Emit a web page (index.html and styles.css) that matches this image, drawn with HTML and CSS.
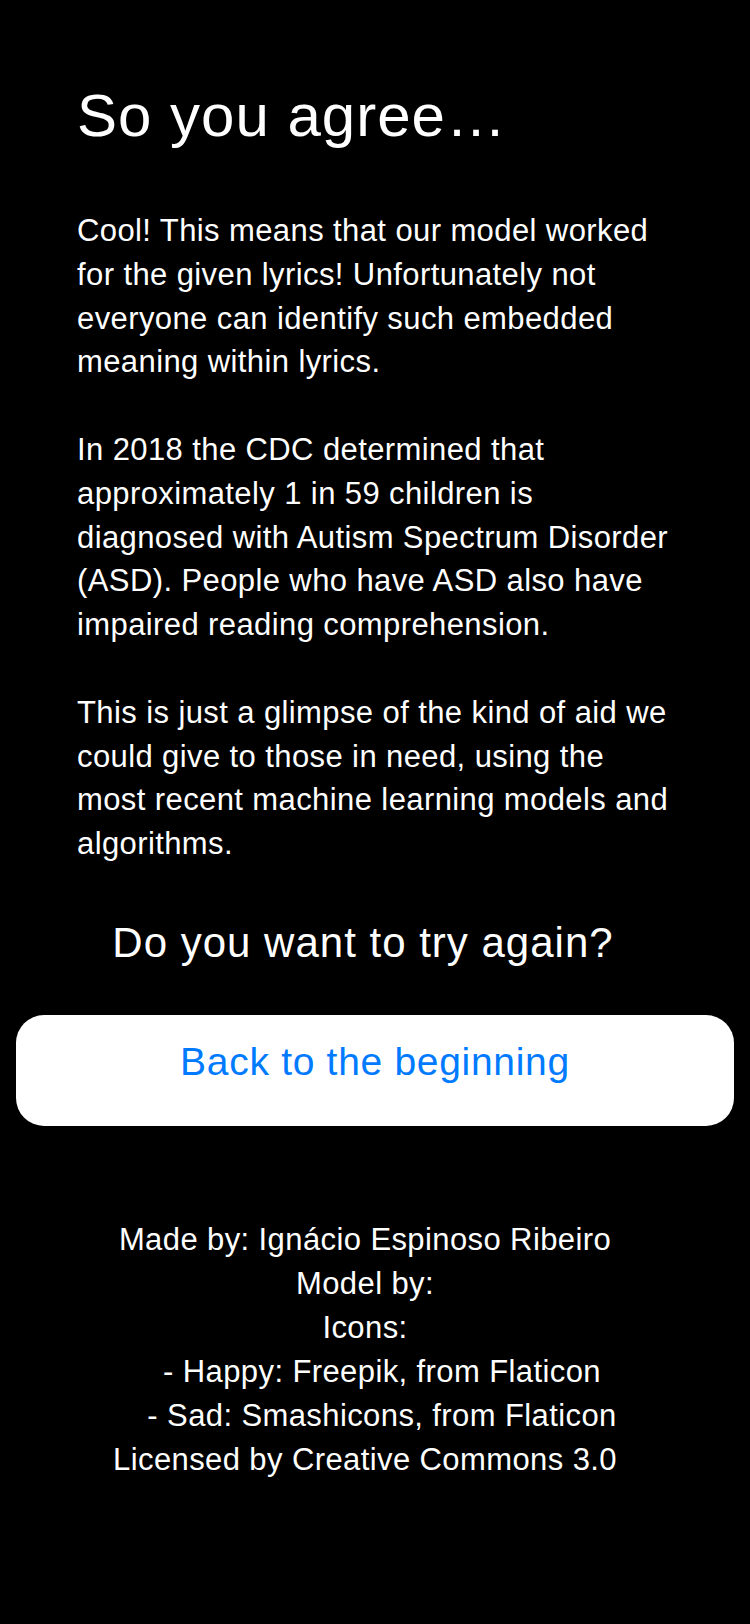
FILE: index.html
```html
<!DOCTYPE html>
<html lang="en">
<head>
<meta charset="utf-8">
<title>So you agree…</title>
<link rel="stylesheet" href="styles.css">
</head>
<body>
<main class="page">
  <h1 class="title">So you agree…</h1>
  <div class="text">
    <p>Cool! This means that our model worked for the given lyrics! Unfortunately not everyone can identify such embedded meaning within lyrics.</p>
    <p>In 2018 the CDC determined that approximately 1 in 59 children is diagnosed with Autism Spectrum Disorder (ASD). People who have ASD also have impaired reading comprehension.</p>
    <p>This is just a glimpse of the kind of aid we could give to those in need, using the most recent machine learning models and algorithms.</p>
  </div>
  <h2 class="question">Do you want to try again?</h2>
  <button class="back" type="button">Back to the beginning</button>
  <footer class="credits">
    <div class="line">Made by: Ignácio Espinoso Ribeiro</div>
    <div class="line">Model by:</div>
    <div class="line">Icons:</div>
    <div class="line indent">- Happy: Freepik, from Flaticon</div>
    <div class="line indent">- Sad: Smashicons, from Flaticon</div>
    <div class="line">Licensed by Creative Commons 3.0</div>
  </footer>
</main>
</body>
</html>
```

FILE: styles.css
```css
html, body {
  margin: 0;
  padding: 0;
  background: #000;
}

body {
  color: #fff;
  font-family: "Liberation Sans", Arial, Helvetica, sans-serif;
}

.page {
  display: flex;
  flex-direction: column;
  padding-top: 83px;
  min-height: 1624px;
  box-sizing: border-box;
}

.title {
  margin: 0;
  padding-left: 77px;
  font-size: 60px;
  font-weight: 400;
  line-height: 66px;
  letter-spacing: 1px;
}

.text {
  margin-top: 60px;
  padding: 0 74px 0 77px;
  font-size: 31px;
  line-height: 43.8px;
  letter-spacing: 0.4px;
}

.text p {
  margin: 0;
}

.text p + p {
  margin-top: 43.8px;
}

.question {
  margin: 53px 0 0;
  padding-right: 24px;
  text-align: center;
  font-size: 42px;
  font-weight: 400;
  line-height: 48px;
  letter-spacing: 1px;
}

.back {
  margin: 48px 16px 0;
  padding: 25.5px 0 42px;
  border: none;
  border-radius: 28px;
  background: #fff;
  color: #007aff;
  font-family: inherit;
  font-size: 39px;
  line-height: 44px;
  letter-spacing: 0.7px;
  text-align: center;
}

.credits {
  margin-top: 91.5px;
  padding-right: 20px;
  text-align: center;
  font-size: 31px;
  line-height: 44px;
  letter-spacing: 0.4px;
}

.credits .indent {
  padding-left: 34px;
}
```
